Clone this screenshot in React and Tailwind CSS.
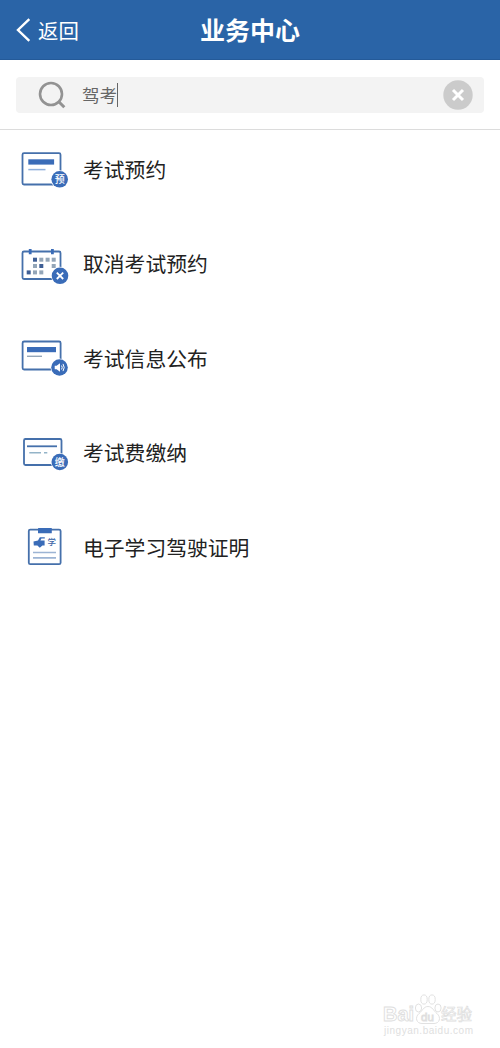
import { useState } from "react";

const BLUE = "#3a6cb8";
const LINE = "#4570ab";

function Badge({ cx, cy, children }) {
  return (
    <>
      <circle cx={cx} cy={cy} r="9" fill="#fff" />
      <circle cx={cx} cy={cy} r="8.3" fill={BLUE} />
      {children}
    </>
  );
}

function BadgeText({ x, y, size = 10, fill = "#fff", children }) {
  return (
    <text x={x} y={y} fontSize={size} fontWeight="500" fill={fill} textAnchor="middle">
      {children}
    </text>
  );
}

function AppointmentIcon() {
  return (
    <>
      <rect x="12.5" y="13.2" width="38" height="31.3" rx="1.5" fill="none" stroke={LINE} strokeWidth="1.8" />
      <rect x="18.3" y="19.3" width="25.8" height="5.3" fill={BLUE} />
      <path d="M18.3 29.6H35.5" stroke="#8fb0dc" strokeWidth="1.5" />
      <Badge cx={49.7} cy={39.3}>
        <BadgeText x={49.7} y={43}>预</BadgeText>
      </Badge>
    </>
  );
}

// [x, y, colour] of every day on the calendar
const DAYS = [
  [25, 24.7, "#3f5f95"],
  [31.3, 24.7, "#94a6b8"],
  [37.6, 24.7, "#94a6b8"],
  [43.7, 24.7, "#94a6b8"],
  [25, 31, "#94a6b8"],
  [31.3, 31, "#3f5f95"],
  [43.7, 31, "#94a6b8"],
  [18.7, 37.4, "#3f5f95"],
  [25, 37.4, "#94a6b8"],
  [31.3, 37.4, "#94a6b8"],
];

function CancelIcon() {
  return (
    <>
      <rect x="12.5" y="16.5" width="38" height="27.5" rx="1.5" fill="none" stroke={LINE} strokeWidth="1.8" />
      <path d="M20.2 14V19.2M42.4 14V19.2" stroke={BLUE} strokeWidth="2.8" />
      {DAYS.map(([x, y, fill]) => (
        <rect key={`${x}-${y}`} x={x - 2} y={y - 2} width="4" height="4" fill={fill} />
      ))}
      <Badge cx={50} cy={40.8}>
        <path d="M46.8 37.6L53.2 44M53.2 37.6L46.8 44" stroke="#fff" strokeWidth="1.8" />
      </Badge>
    </>
  );
}

function NoticeIcon() {
  return (
    <>
      <rect x="12.6" y="12.5" width="38" height="28" rx="1.5" fill="none" stroke={LINE} strokeWidth="1.8" />
      <rect x="17" y="18" width="29" height="5.2" fill={BLUE} />
      <path d="M17 27.3H32" stroke="#94a6b8" strokeWidth="1.4" />
      <Badge cx={49.5} cy={38.5}>
        <path d="M44.7 36.8H46.6L50 34.2V42.8L46.6 40.2H44.7Z" fill="#fff" />
        <path d="M51.6 36.5Q52.8 38.5 51.6 40.5M53 34.9Q55.4 38.5 53 42.1" fill="none" stroke="#fff" strokeWidth="1" />
      </Badge>
    </>
  );
}

function PaymentIcon() {
  return (
    <>
      <rect x="14" y="15" width="37.5" height="26" rx="1.5" fill="none" stroke={LINE} strokeWidth="1.8" />
      <path d="M17 22.3H47" stroke={LINE} strokeWidth="1.8" />
      <path d="M19.3 28.8H31M34 28.8H37.3" stroke="#94b4c8" strokeWidth="1.4" />
      <Badge cx={49.8} cy={38}>
        <BadgeText x={49.8} y={41.7}>缴</BadgeText>
      </Badge>
    </>
  );
}

function CertificateIcon() {
  return (
    <>
      <rect x="18.8" y="11.6" width="31.8" height="34.6" rx="1.5" fill="none" stroke={LINE} strokeWidth="1.8" />
      <rect x="28" y="10" width="13.8" height="5.2" rx="0.5" fill={BLUE} />
      <path d="M23.5 23.4L28 22.6L29.8 19.2H34.8V20.6H31.4L30.4 22.4H34.6V27.4H32.4L29.8 29.8L27.4 27.6H23.8Z" fill={BLUE} />
      <BadgeText x={41.7} y={26.8} size={8.5} fill="#3f68a8">学</BadgeText>
      <path d="M23 34.5H46M23 39.8H46" stroke="#9cb4d4" strokeWidth="1.7" />
    </>
  );
}

const services = [
  { name: "考试预约", Icon: AppointmentIcon },
  { name: "取消考试预约", Icon: CancelIcon },
  { name: "考试信息公布", Icon: NoticeIcon },
  { name: "考试费缴纳", Icon: PaymentIcon },
  { name: "电子学习驾驶证明", Icon: CertificateIcon },
];

function Watermark() {
  return (
    <svg
      className="absolute right-[22px] bottom-[8px] w-[96px] h-[50px]"
      viewBox="0 0 96 50"
      fill="#fff"
      stroke="#dedede"
      strokeWidth="0.9"
    >
      <text x="1" y="30.5" fontSize="20" fontWeight="bold" fontFamily="Liberation Sans">Bai</text>
      <ellipse cx="36.5" cy="18" rx="3.1" ry="4" />
      <ellipse cx="42" cy="9.5" rx="3.2" ry="4.6" />
      <ellipse cx="50" cy="9.5" rx="3.2" ry="4.6" />
      <ellipse cx="56" cy="18" rx="3.1" ry="4" />
      <path d="M46 16.5C50.5 16.5 51.5 21 55 23.5C59.5 27.5 57.5 33.5 52 33.5H40C34.5 33.5 32.5 27.5 37 23.5C40.5 21 41.5 16.5 46 16.5Z" />
      <text x="39" y="30.5" fontSize="11.5" fontFamily="Liberation Sans">du</text>
      <text x="59" y="30" fontSize="15.5" strokeWidth="0.7">经验</text>
      <text x="2" y="44" fontSize="10" fontFamily="Liberation Sans" stroke="none" fill="#e0e0e0" textLength="89">
        jingyan.baidu.com
      </text>
    </svg>
  );
}

export default function App() {
  const [keyword, setKeyword] = useState("驾考");

  return (
    <main className="relative w-full h-[1048px] overflow-hidden bg-white text-[#222] font-['Noto_Sans_CJK_SC',sans-serif]">
      <header className="grid grid-cols-3 items-center h-[60px] bg-[#2a64a7] border-b border-[#245a99] text-white">
        <button type="button" className="flex items-center pl-4 text-[20.4px] leading-none">
          <svg className="w-[15px] h-[24px] mr-[7px]" viewBox="0 0 15 24" fill="none" stroke="currentColor" strokeWidth="2.4">
            <path d="M13.3 1.2L2 12L13.3 22.8" />
          </svg>
          <span className="pt-px">返回</span>
        </button>
        <h1 className="text-center text-[25px] leading-none font-bold">业务中心</h1>
      </header>

      <div className="h-[70px] px-4 pt-[17px] border-b border-[#dcdcdc]">
        <div className="flex items-center h-[36px] pl-[22px] pr-[11px] rounded-[4px] bg-[#f3f3f3]">
          <svg className="w-[28px] h-[28px] mr-[16px]" viewBox="0 0 28 28" fill="none" stroke="#929292" strokeWidth="2.6">
            <circle cx="13" cy="13" r="11" />
            <path d="M20.8 20.8L26.3 26.3" strokeWidth="3" />
          </svg>
          <span className="text-[17.5px] leading-none text-[#666]">{keyword}</span>
          <span className="w-px h-[24px] bg-[#666]" />
          <button type="button" className="ml-auto" onClick={() => setKeyword("")} aria-label="清除">
            <svg className="block w-[30px] h-[30px]" viewBox="0 0 30 30">
              <circle cx="15" cy="15" r="14.7" fill="#cbcbcb" />
              <path d="M10 10L20 20M20 10L10 20" stroke="#fff" strokeWidth="3" />
            </svg>
          </button>
        </div>
      </div>

      <ul className="flex flex-col gap-[34.5px] pt-[10px] pl-[10px]">
        {services.map(({ name, Icon }) => (
          <li key={name} className="flex items-center h-[60px]">
            <svg className="w-[73px] h-[60px] shrink-0" viewBox="0 0 73 60">
              <Icon />
            </svg>
            <span className="pb-[2px] text-[20.8px] leading-none">{name}</span>
          </li>
        ))}
      </ul>

      <Watermark />
    </main>
  );
}
